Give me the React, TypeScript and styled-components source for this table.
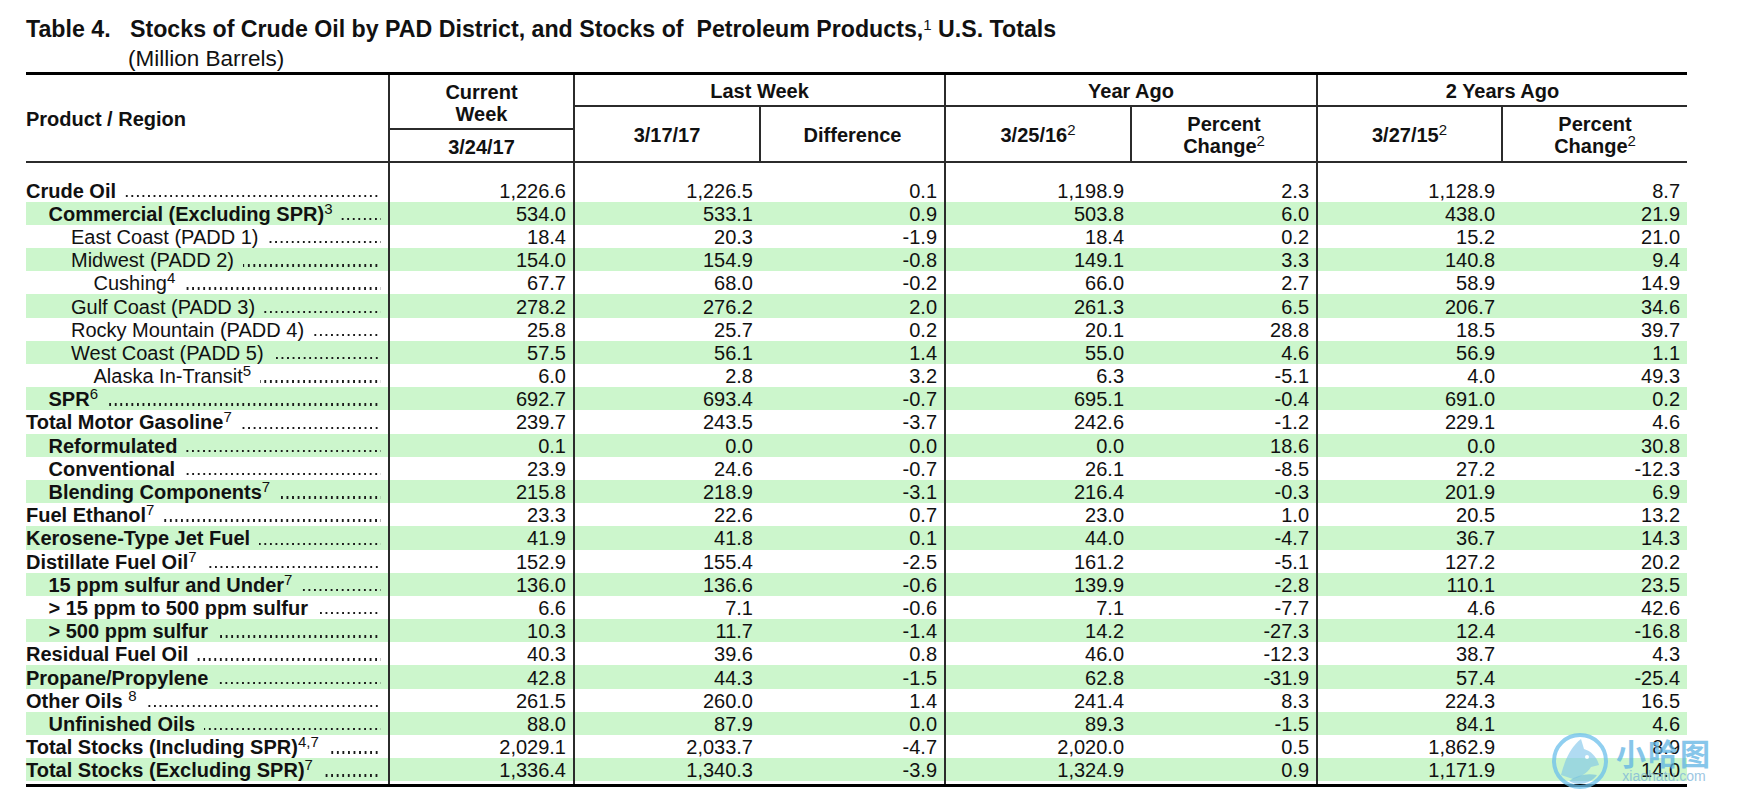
import React from "react";
import styled, { createGlobalStyle } from "styled-components";

const GlobalStyle = createGlobalStyle`
	body {
		margin: 0;
		background: #fff;
		color: #111;
		font-family: "Liberation Sans", Arial, sans-serif;
	}
`;

const Page = styled.div`
	position: relative;
	padding: 16px 0 0 26px;
	height: 775px;
	overflow: hidden;
`;

const Title = styled.h1`
	display: flex;
	margin: 0;
	font-size: 23.2px;
	line-height: 27px;
	font-weight: 700;
	white-space: nowrap;
`;

const TitleNum = styled.span`
	flex: 0 0 104px;
`;

const Subtitle = styled.div`
	margin: 2px 0 0 102px;
	font-size: 22.5px;
	line-height: 27px;
`;

const Table = styled.table`
	width: 1661px;
	table-layout: fixed;
	border-collapse: collapse;
	border-top: 3px solid #000;
	border-bottom: 3px solid #000;
	font-size: 20px;
`;

const LINE = "2px solid #2b2b2b";

const HeadRow = styled.tr<{ $h: number }>`
	height: ${(p) => p.$h}px;
`;

const HeadCell = styled.th<{ $left?: boolean; $bottom?: boolean; $start?: boolean }>`
	padding: 3px 0 0;
	font-size: 20px;
	line-height: 22px;
	font-weight: 700;
	text-align: ${(p) => (p.$start ? "left" : "center")};
	vertical-align: middle;
	border-left: ${(p) => (p.$left ? LINE : "none")};
	border-bottom: ${(p) => (p.$bottom ? LINE : "none")};
`;

const Row = styled.tr<{ $shade?: boolean }>`
	height: 23.2px;
	background: ${(p) => (p.$shade ? "#ccf6cc" : "transparent")};
`;

const SpacerRow = styled.tr<{ $h: number }>`
	height: ${(p) => p.$h}px;
`;

const Cell = styled.td<{ $left?: boolean }>`
	padding: 1px 7px 0 0;
	line-height: 22px;
	text-align: right;
	white-space: nowrap;
	border-left: ${(p) => (p.$left ? LINE : "none")};
`;

const LabelCell = styled.td`
	padding: 1px 7px 0 0;
	line-height: 22px;
	white-space: nowrap;
`;

const LabelBox = styled.div<{ $level: number; $bold?: boolean }>`
	display: flex;
	padding-left: ${(p) => p.$level * 22.5}px;
	font-weight: ${(p) => (p.$bold ? 700 : 400)};
`;

// dot leader drawn as a row of periods along the baseline
const Leader = styled.span`
	flex: 1;
	align-self: flex-start;
	height: 2.4px;
	margin: 15.1px 0 0 9px;
	background-image: linear-gradient(to right, #1a1a1a 2.3px, transparent 2.3px);
	background-size: 5.56px 100%;
	background-repeat: repeat-x;
	background-position: right top;
`;

const Sup = styled.sup`
	font-size: 15px;
	font-weight: 400;
	line-height: 0;
	vertical-align: 7px;
`;

const Watermark = styled.div`
	position: absolute;
	left: 1550px;
	top: 728px;
	display: flex;
	align-items: center;
	gap: 6px;
	opacity: 0.75;
	pointer-events: none;
`;

const MarkText = styled.div`
	display: flex;
	flex-direction: column;
	align-items: center;
	color: #5fb3e4;
`;

const MarkCn = styled.span`
	font-family: "Noto Sans CJK SC", sans-serif;
	font-weight: 700;
	font-size: 30px;
	line-height: 34px;
	letter-spacing: 2px;
`;

const MarkEn = styled.span`
	font-family: "Liberation Sans", Arial, sans-serif;
	font-size: 14px;
	line-height: 14px;
	color: #7cb4d8;
`;

type Line = {
	label: string;
	sup?: string;
	level: number;
	bold?: boolean;
	v: string[];
};

const rows: Line[] = [
	{ label: "Crude Oil", level: 0, bold: true, v: ["1,226.6", "1,226.5", "0.1", "1,198.9", "2.3", "1,128.9", "8.7"] },
	{ label: "Commercial (Excluding SPR)", sup: "3", level: 1, bold: true, v: ["534.0", "533.1", "0.9", "503.8", "6.0", "438.0", "21.9"] },
	{ label: "East Coast (PADD 1) ", level: 2, v: ["18.4", "20.3", "-1.9", "18.4", "0.2", "15.2", "21.0"] },
	{ label: "Midwest (PADD 2)", level: 2, v: ["154.0", "154.9", "-0.8", "149.1", "3.3", "140.8", "9.4"] },
	{ label: "Cushing", sup: "4", level: 3, v: ["67.7", "68.0", "-0.2", "66.0", "2.7", "58.9", "14.9"] },
	{ label: "Gulf Coast (PADD 3)", level: 2, v: ["278.2", "276.2", "2.0", "261.3", "6.5", "206.7", "34.6"] },
	{ label: "Rocky Mountain (PADD 4) ", level: 2, v: ["25.8", "25.7", "0.2", "20.1", "28.8", "18.5", "39.7"] },
	{ label: "West Coast (PADD 5)", level: 2, v: ["57.5", "56.1", "1.4", "55.0", "4.6", "56.9", "1.1"] },
	{ label: "Alaska In-Transit", sup: "5", level: 3, v: ["6.0", "2.8", "3.2", "6.3", "-5.1", "4.0", "49.3"] },
	{ label: "SPR", sup: "6", level: 1, bold: true, v: ["692.7", "693.4", "-0.7", "695.1", "-0.4", "691.0", "0.2"] },
	{ label: "Total Motor Gasoline", sup: "7", level: 0, bold: true, v: ["239.7", "243.5", "-3.7", "242.6", "-1.2", "229.1", "4.6"] },
	{ label: "Reformulated", level: 1, bold: true, v: ["0.1", "0.0", "0.0", "0.0", "18.6", "0.0", "30.8"] },
	{ label: "Conventional", level: 1, bold: true, v: ["23.9", "24.6", "-0.7", "26.1", "-8.5", "27.2", "-12.3"] },
	{ label: "Blending Components", sup: "7", level: 1, bold: true, v: ["215.8", "218.9", "-3.1", "216.4", "-0.3", "201.9", "6.9"] },
	{ label: "Fuel Ethanol", sup: "7", level: 0, bold: true, v: ["23.3", "22.6", "0.7", "23.0", "1.0", "20.5", "13.2"] },
	{ label: "Kerosene-Type Jet Fuel", level: 0, bold: true, v: ["41.9", "41.8", "0.1", "44.0", "-4.7", "36.7", "14.3"] },
	{ label: "Distillate Fuel Oil", sup: "7", level: 0, bold: true, v: ["152.9", "155.4", "-2.5", "161.2", "-5.1", "127.2", "20.2"] },
	{ label: "15 ppm sulfur and Under", sup: "7", level: 1, bold: true, v: ["136.0", "136.6", "-0.6", "139.9", "-2.8", "110.1", "23.5"] },
	{ label: "> 15 ppm to 500 ppm sulfur", level: 1, bold: true, v: ["6.6", "7.1", "-0.6", "7.1", "-7.7", "4.6", "42.6"] },
	{ label: "> 500 ppm sulfur", level: 1, bold: true, v: ["10.3", "11.7", "-1.4", "14.2", "-27.3", "12.4", "-16.8"] },
	{ label: "Residual Fuel Oil ", level: 0, bold: true, v: ["40.3", "39.6", "0.8", "46.0", "-12.3", "38.7", "4.3"] },
	{ label: "Propane/Propylene", level: 0, bold: true, v: ["42.8", "44.3", "-1.5", "62.8", "-31.9", "57.4", "-25.4"] },
	{ label: "Other Oils ", sup: "8", level: 0, bold: true, v: ["261.5", "260.0", "1.4", "241.4", "8.3", "224.3", "16.5"] },
	{ label: "Unfinished Oils", level: 1, bold: true, v: ["88.0", "87.9", "0.0", "89.3", "-1.5", "84.1", "4.6"] },
	{ label: "Total Stocks (Including SPR)", sup: "4,7", level: 0, bold: true, v: ["2,029.1", "2,033.7", "-4.7", "2,020.0", "0.5", "1,862.9", "8.9"] },
	{ label: "Total Stocks (Excluding SPR)", sup: "7", level: 0, bold: true, v: ["1,336.4", "1,340.3", "-3.9", "1,324.9", "0.9", "1,171.9", "14.0"] },
];

// value columns that start a group get a rule on their left
const groupStart = [true, true, false, true, false, true, false];
const colWidths = [363, 185, 186, 185, 186, 186, 185, 185];

function Logo() {
	return (
		<svg width="60" height="62" viewBox="0 0 60 62">
			<circle cx="30" cy="33" r="26" fill="none" stroke="#6cc0ec" strokeWidth="4" />
			<path d="M11 47 C15 31 21 19 31 11 L34 21 C41 23 47 29 49 37 L41 39 C37 45 31 49 23 51 Z" fill="#7cc4ea" opacity="0.8" />
			<path d="M19 53 C27 47 37 45 47 47 C41 55 29 59 19 53 Z" fill="#5fb3e4" opacity="0.7" />
			<circle cx="37" cy="29" r="2" fill="#fff" />
		</svg>
	);
}

function Spacer({ h }: { h: number }) {
	return (
		<SpacerRow $h={h}>
			<LabelCell />
			{groupStart.map((g, i) => (
				<Cell key={i} $left={g} />
			))}
		</SpacerRow>
	);
}

export default function App() {
	return (
		<Page>
			<GlobalStyle />
			<Title>
				<TitleNum>Table 4.</TitleNum>
				<span>
					Stocks of Crude Oil by PAD District, and Stocks of&nbsp; Petroleum Products,<Sup>1</Sup> U.S. Totals
				</span>
			</Title>
			<Subtitle>(Million Barrels)</Subtitle>
			<Table>
				<colgroup>
					{colWidths.map((w, i) => (
						<col key={i} style={{ width: w }} />
					))}
				</colgroup>
				<thead>
					<HeadRow $h={32}>
						<HeadCell rowSpan={3} $start $bottom>
							Product / Region
						</HeadCell>
						<HeadCell rowSpan={2} $left $bottom>
							Current
							<br />
							Week
						</HeadCell>
						<HeadCell colSpan={2} $left $bottom>
							Last Week
						</HeadCell>
						<HeadCell colSpan={2} $left $bottom>
							Year Ago
						</HeadCell>
						<HeadCell colSpan={2} $left $bottom>
							2 Years Ago
						</HeadCell>
					</HeadRow>
					<HeadRow $h={23}>
						<HeadCell rowSpan={2} $left $bottom>
							3/17/17
						</HeadCell>
						<HeadCell rowSpan={2} $left $bottom>
							Difference
						</HeadCell>
						<HeadCell rowSpan={2} $left $bottom>
							3/25/16<Sup>2</Sup>
						</HeadCell>
						<HeadCell rowSpan={2} $left $bottom>
							Percent
							<br />
							Change<Sup>2</Sup>
						</HeadCell>
						<HeadCell rowSpan={2} $left $bottom>
							3/27/15<Sup>2</Sup>
						</HeadCell>
						<HeadCell rowSpan={2} $left $bottom>
							Percent
							<br />
							Change<Sup>2</Sup>
						</HeadCell>
					</HeadRow>
					<HeadRow $h={33}>
						<HeadCell $left $bottom>
							3/24/17
						</HeadCell>
					</HeadRow>
				</thead>
				<tbody>
					<Spacer h={17} />
					{rows.map((r, i) => (
						<Row key={r.label} $shade={i % 2 === 1}>
							<LabelCell>
								<LabelBox $level={r.level} $bold={r.bold}>
									<span>
										{r.label}
										{r.sup && <Sup>{r.sup}</Sup>}
									</span>
									<Leader />
								</LabelBox>
							</LabelCell>
							{r.v.map((v, j) => (
								<Cell key={j} $left={groupStart[j]}>
									{v}
								</Cell>
							))}
						</Row>
					))}
					<Spacer h={4} />
				</tbody>
			</Table>
			<Watermark>
				<Logo />
				<MarkText>
					<MarkCn>小哈图</MarkCn>
					<MarkEn>xiaohatu.com</MarkEn>
				</MarkText>
			</Watermark>
		</Page>
	);
}
